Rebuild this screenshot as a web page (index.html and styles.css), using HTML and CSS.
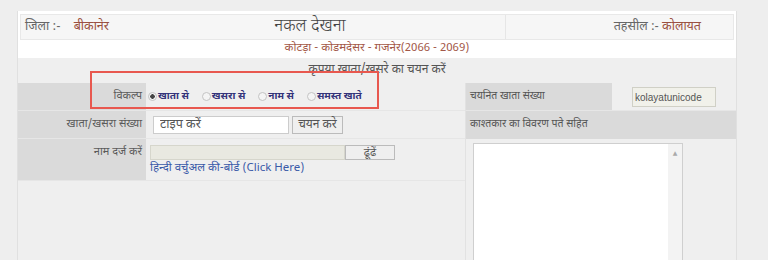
FILE: index.html
```html
<!DOCTYPE html>
<html lang="hi">
<head>
  <meta charset="UTF-8">
  <title>नकल देखना</title>
  <link rel="stylesheet" href="styles.css">
</head>
<body>
  <div class="page">
    <div class="top">
      <div class="head-row">
        <div class="cell-district">जिला :- <span class="place">बीकानेर</span></div>
        <div class="cell-title">नकल देखना</div>
        <div class="cell-tehsil">तहसील :- <span class="place">कोलायत</span></div>
      </div>
      <div class="route">कोटड़ा - कोडमदेसर - गजनेर(2066 - 2069)</div>
    </div>
    <div class="notice">कृपया खाता/खसरे का चयन करें</div>

    <div class="form">
      <div class="left">
        <div class="row">
          <div class="label">विकल्प</div>
          <div class="field options">
            <label><input type="radio" name="opt" checked>खाता से</label>
            <label><input type="radio" name="opt">खसरा से</label>
            <label><input type="radio" name="opt">नाम से</label>
            <label><input type="radio" name="opt">समस्त खाते</label>
          </div>
        </div>
        <div class="row">
          <div class="label">खाता/खसरा संख्या</div>
          <div class="field">
            <input class="txt-number" type="text" placeholder="टाइप करें">
            <button class="btn btn-pick">चयन करे</button>
          </div>
        </div>
        <div class="row row-name">
          <div class="label">नाम दर्ज करें</div>
          <div class="field field-name">
            <div class="name-line">
              <input class="txt-name" type="text">
              <button class="btn btn-find">ढूंढें</button>
            </div>
            <a class="kb-link" href="#">हिन्दी वर्चुअल की-बोर्ड (Click Here)</a>
          </div>
        </div>
      </div>

      <div class="right">
        <div class="pick-row">
          <div class="label-r">चयनित खाता संख्या</div>
          <div class="value"><input class="txt-selected" type="text" value="kolayatunicode" readonly></div>
        </div>
        <div class="owner-head">काश्तकार का विवरण पते सहित</div>
        <div class="box">
          <textarea class="owner-text"></textarea>
          <span class="scroll">&#9650;</span>
        </div>
      </div>
    </div>

    <!-- annotation box over the options row -->
    <div class="mark"></div>
  </div>
</body>
</html>
```

FILE: styles.css
```css
body{
  margin: 0;
  background: #eeeeee;
  font-family: "Noto Sans Devanagari", "Lohit Devanagari", "Liberation Sans", sans-serif;
  font-size: 12px;
  color: #555;
}
.page{
  position: relative;
  margin: 11px 0 0 17px;
  width: 718px;
  height: 260px;
  border-left: 1px solid #e0e0e0;
  border-right: 1px solid #e0e0e0;
  background: #efefef;
}

/* header */
.top{
  background: #fff;
  padding: 3px 2px 0;
}
.head-row{
  display: grid;
  grid-template-columns: 100px 384px 1fr;
  height: 26px;
  box-sizing: border-box;
  background: #f6f6f6;
  border: 1px solid #e8e8e8;
  line-height: 24px;
  font-size: 12.5px;
}
.cell-district{
  padding-left: 4px;
  color: #666;
}
.cell-district .place{
  margin-left: 10px;
}
.place{
  color: #9a5040;
}
.cell-title{
  text-align: center;
  font-size: 17px;
  font-weight: 300;
  color: #444;
  padding-right: 6px;
}
.cell-tehsil{
  border-left: 1px solid #e6e6e6;
  text-align: right;
  padding-right: 32px;
  color: #666;
}
.route{
  height: 18px;
  line-height: 18px;
  text-align: center;
  color: #a35848;
  font-size: 11.5px;
}
.notice{
  height: 25px;
  line-height: 25px;
  text-align: center;
  color: #555;
}

/* form */
.form{
  display: flex;
}
.left{
  width: 447px;
}
.row{
  display: grid;
  grid-template-columns: 128px 1fr;
  height: 28px;
  border-bottom: 1px solid #e6e6e6;
  box-sizing: border-box;
}
.row-name{
  height: 42px;
}
.label{
  background: #dadada;
  text-align: right;
  padding-right: 4px;
  line-height: 27px;
  color: #5a5a5a;
  font-size: 11px;
}
.field{
  display: flex;
  align-items: center;
  padding-left: 7px;
}
.options{
  padding-left: 2px;
}
.options label{
  display: flex;
  align-items: center;
  margin-right: 13px;
  font-weight: bold;
  color: #33337a;
  font-size: 10px;
}
.options input{
  appearance: none;
  width: 9px;
  height: 9px;
  margin: 0 1px 0 0;
  border: 1px solid #c4c4c4;
  border-radius: 50%;
  background: #f4f4f4;
}
.options input:checked{
  background: radial-gradient(circle, #444 0 2px, #f4f4f4 2.5px);
}
.txt-number{
  width: 136px;
  height: 18px;
  box-sizing: border-box;
  border: 1px solid #ccc;
  padding: 0 6px;
  font-family: inherit;
  font-size: 12.5px;
}
.txt-number::placeholder{
  color: #555;
}
.btn{
  box-sizing: border-box;
  border: 1px solid #bbb;
  background: #efefef;
  color: #555;
  font-family: inherit;
  font-size: 12px;
  padding: 0;
}
.btn-pick{
  width: 51px;
  height: 18px;
  margin-left: 3px;
}
.field-name{
  flex-direction: column;
  align-items: flex-start;
  padding: 6px 0 0 4px;
}
.name-line{
  display: flex;
}
.txt-name{
  width: 195px;
  height: 15px;
  box-sizing: border-box;
  border: 1px solid #d6d6cc;
  background: #e9e9e1;
}
.btn-find{
  width: 50px;
  height: 15px;
  line-height: 12px;
  font-size: 11px;
}
.kb-link{
  margin-top: 1px;
  color: #3a5aa8;
  text-decoration: none;
  font-size: 11.5px;
}

/* right side */
.right{
  flex: 1;
  border-left: 1px solid #e2e2e2;
}
.pick-row{
  display: grid;
  grid-template-columns: 146px 1fr;
  height: 28px;
  border-bottom: 1px solid #e6e6e6;
  box-sizing: border-box;
}
.label-r{
  background: #dadada;
  padding-left: 4px;
  line-height: 27px;
  font-size: 10.5px;
}
.value{
  padding: 4px 0 0 20px;
}
.txt-selected{
  width: 84px;
  height: 20px;
  box-sizing: border-box;
  border: 1px solid #d0d0c6;
  background: #f1f1ea;
  color: #555;
  font-family: "Liberation Sans", sans-serif;
  font-size: 10px;
  padding: 0 2px;
}
.owner-head{
  height: 28px;
  line-height: 28px;
  background: #dadada;
  padding-left: 4px;
  font-size: 10.5px;
}
.box{
  display: flex;
  width: 210px;
  height: 130px;
  margin: 4px 0 0 7px;
  box-sizing: border-box;
  border: 1px solid #cfcfcf;
  background: #fff;
}
.owner-text{
  flex: 1;
  border: 0;
  resize: none;
  outline: none;
  overflow: hidden;
}
.scroll{
  width: 14px;
  background: #f3f3f3;
  color: #aaa;
  font-size: 6px;
  text-align: center;
  padding-top: 5px;
  font-family: "DejaVu Sans", sans-serif;
}

/* red annotation */
.mark{
  position: absolute;
  left: 72px;
  top: 60px;
  width: 289px;
  height: 38px;
  box-sizing: border-box;
  border: 2px solid #e8584f;
}
```
